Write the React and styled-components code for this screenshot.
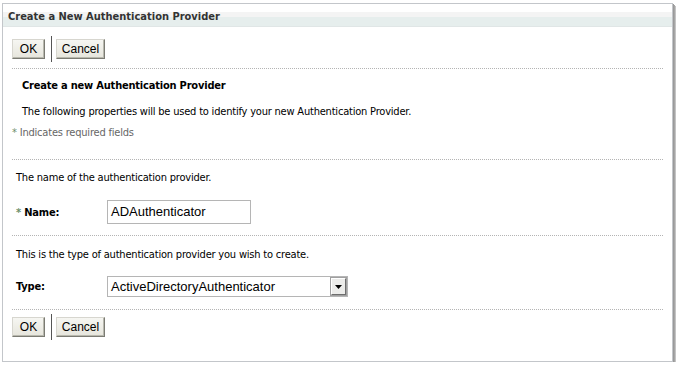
import React from 'react';
import styled, { createGlobalStyle } from 'styled-components';

const Global = createGlobalStyle`
  body {
    margin: 0;
    background: #fff;
    font-family: "DejaVu Sans Condensed", "DejaVu Sans", sans-serif;
  }
`;

const Panel = styled.div`
  margin: 3px 0 0 2px;
  width: 671px;
  height: 359px;
  border: 1px solid #c3c6ca;
  box-shadow: 1px 1px 0 #9a9a9a, 2px 2px 0 #a6a6a6, 3px 3px 0 #c4c4c4;
  box-sizing: border-box;
  background: #fff;
`;

const Header = styled.div`
  height: 23px;
  padding-left: 5px;
  display: flex;
  align-items: flex-end;
  padding-bottom: 3px;
  box-sizing: border-box;
  background: linear-gradient(to bottom, #fff 0 8px, #f4f4f4 8px 13px, #e6eeed 13px);
  border-bottom: 1px solid #e0e6e6;
  font-weight: bold;
  font-size: 11px;
  color: #333;
`;

const Body = styled.div`
  padding: 0 9px;
  letter-spacing: -0.2px;
`;

const ButtonBar = styled.div`
  display: flex;
  align-items: center;
  height: 26px;
  margin-top: ${p => p.top}px;
  padding-bottom: ${p => p.bottom}px;
`;

const Button = styled.button`
  height: 20px;
  width: ${p => p.w}px;
  padding: 0;
  font-family: "Liberation Sans", Arial, sans-serif;
  font-size: 12px;
  letter-spacing: 0;
  color: #000;
  background: linear-gradient(to bottom, #f6f6f2, #e6e5dc);
  border: 1px solid;
  border-color: #d7d6cf #7b7b73 #7b7b73 #d7d6cf;
  box-shadow: inset -1px -1px 0 #b8b8ae;
`;

const Sep = styled.div`
  width: 1px;
  height: 26px;
  background: #555;
  margin: 0 4px 0 6px;
`;

const Dotted = styled.div`
  border-top: 1px dotted #b4b4b4;
  margin-top: ${p => p.top || 0}px;
`;

const SubTitle = styled.div`
  font-weight: bold;
  font-size: 11px;
  color: #000;
  padding-left: 10px;
  margin-top: 10px;
`;

const Text = styled.div`
  font-size: 11px;
  color: #000;
  padding-left: ${p => p.indent || 0}px;
  margin-top: ${p => p.top || 0}px;
`;

const Required = styled.div`
  font-size: 11px;
  color: #666;
  margin-top: 8px;
`;

const Star = styled.span`
  color: #6c8f6a;
`;

const FieldRow = styled.div`
  display: flex;
  align-items: center;
  padding-left: 4px;
  margin-top: ${p => p.top}px;
`;

const Label = styled.div`
  width: 91px;
  font-size: 11px;
  font-weight: bold;
  color: #000;
`;

const Input = styled.div`
  width: 144px;
  height: 24px;
  box-sizing: border-box;
  border: 1px solid #b5b5b5;
  font-family: "Liberation Sans", Arial, sans-serif;
  font-size: 13px;
  letter-spacing: 0;
  line-height: 22px;
  padding-left: 3px;
`;

const Select = styled.div`
  width: 241px;
  height: 21px;
  box-sizing: border-box;
  border: 1px solid #b5b5b5;
  display: flex;
  align-items: stretch;
  font-family: "Liberation Sans", Arial, sans-serif;
  font-size: 13px;
  letter-spacing: 0;
`;

const SelectText = styled.div`
  flex: 1;
  line-height: 19px;
  padding-left: 3px;
`;

const Arrow = styled.div`
  width: 15px;
  margin: 1px;
  box-sizing: border-box;
  background: #ececea;
  border: 1px solid;
  border-color: #fff #6e6e6e #6e6e6e #fff;
  box-shadow: 0 0 0 1px #a0a0a0;
  display: flex;
  align-items: center;
  justify-content: center;
`;

export default function App() {
  return (
    <>
      <Global />
      <Panel>
        <Header>Create a New Authentication Provider</Header>
        <Body>
          <ButtonBar top={9} bottom={6}>
            <Button w={33}>OK</Button>
            <Sep />
            <Button w={49}>Cancel</Button>
          </ButtonBar>
          <Dotted />
          <SubTitle>Create a new Authentication Provider</SubTitle>
          <Text indent={10} top={13}>
            The following properties will be used to identify your new Authentication Provider.
          </Text>
          <Required><Star>*</Star> Indicates required fields</Required>
          <Dotted top={20} />
          <Text indent={4} top={11}>The name of the authentication provider.</Text>
          <FieldRow top={16}>
            <Label><Star>*</Star> Name:</Label>
            <Input>ADAuthenticator</Input>
          </FieldRow>
          <Dotted top={11} />
          <Text indent={4} top={12}>This is the type of authentication provider you wish to create.</Text>
          <FieldRow top={15}>
            <Label>Type:</Label>
            <Select>
              <SelectText>ActiveDirectoryAuthenticator</SelectText>
              <Arrow>
                <svg width="7" height="4" viewBox="0 0 7 4"><path d="M0 0h7L3.5 4z" fill="#000" /></svg>
              </Arrow>
            </Select>
          </FieldRow>
          <Dotted top={12} />
          <ButtonBar top={4} bottom={0}>
            <Button w={33}>OK</Button>
            <Sep />
            <Button w={49}>Cancel</Button>
          </ButtonBar>
        </Body>
      </Panel>
    </>
  );
}
